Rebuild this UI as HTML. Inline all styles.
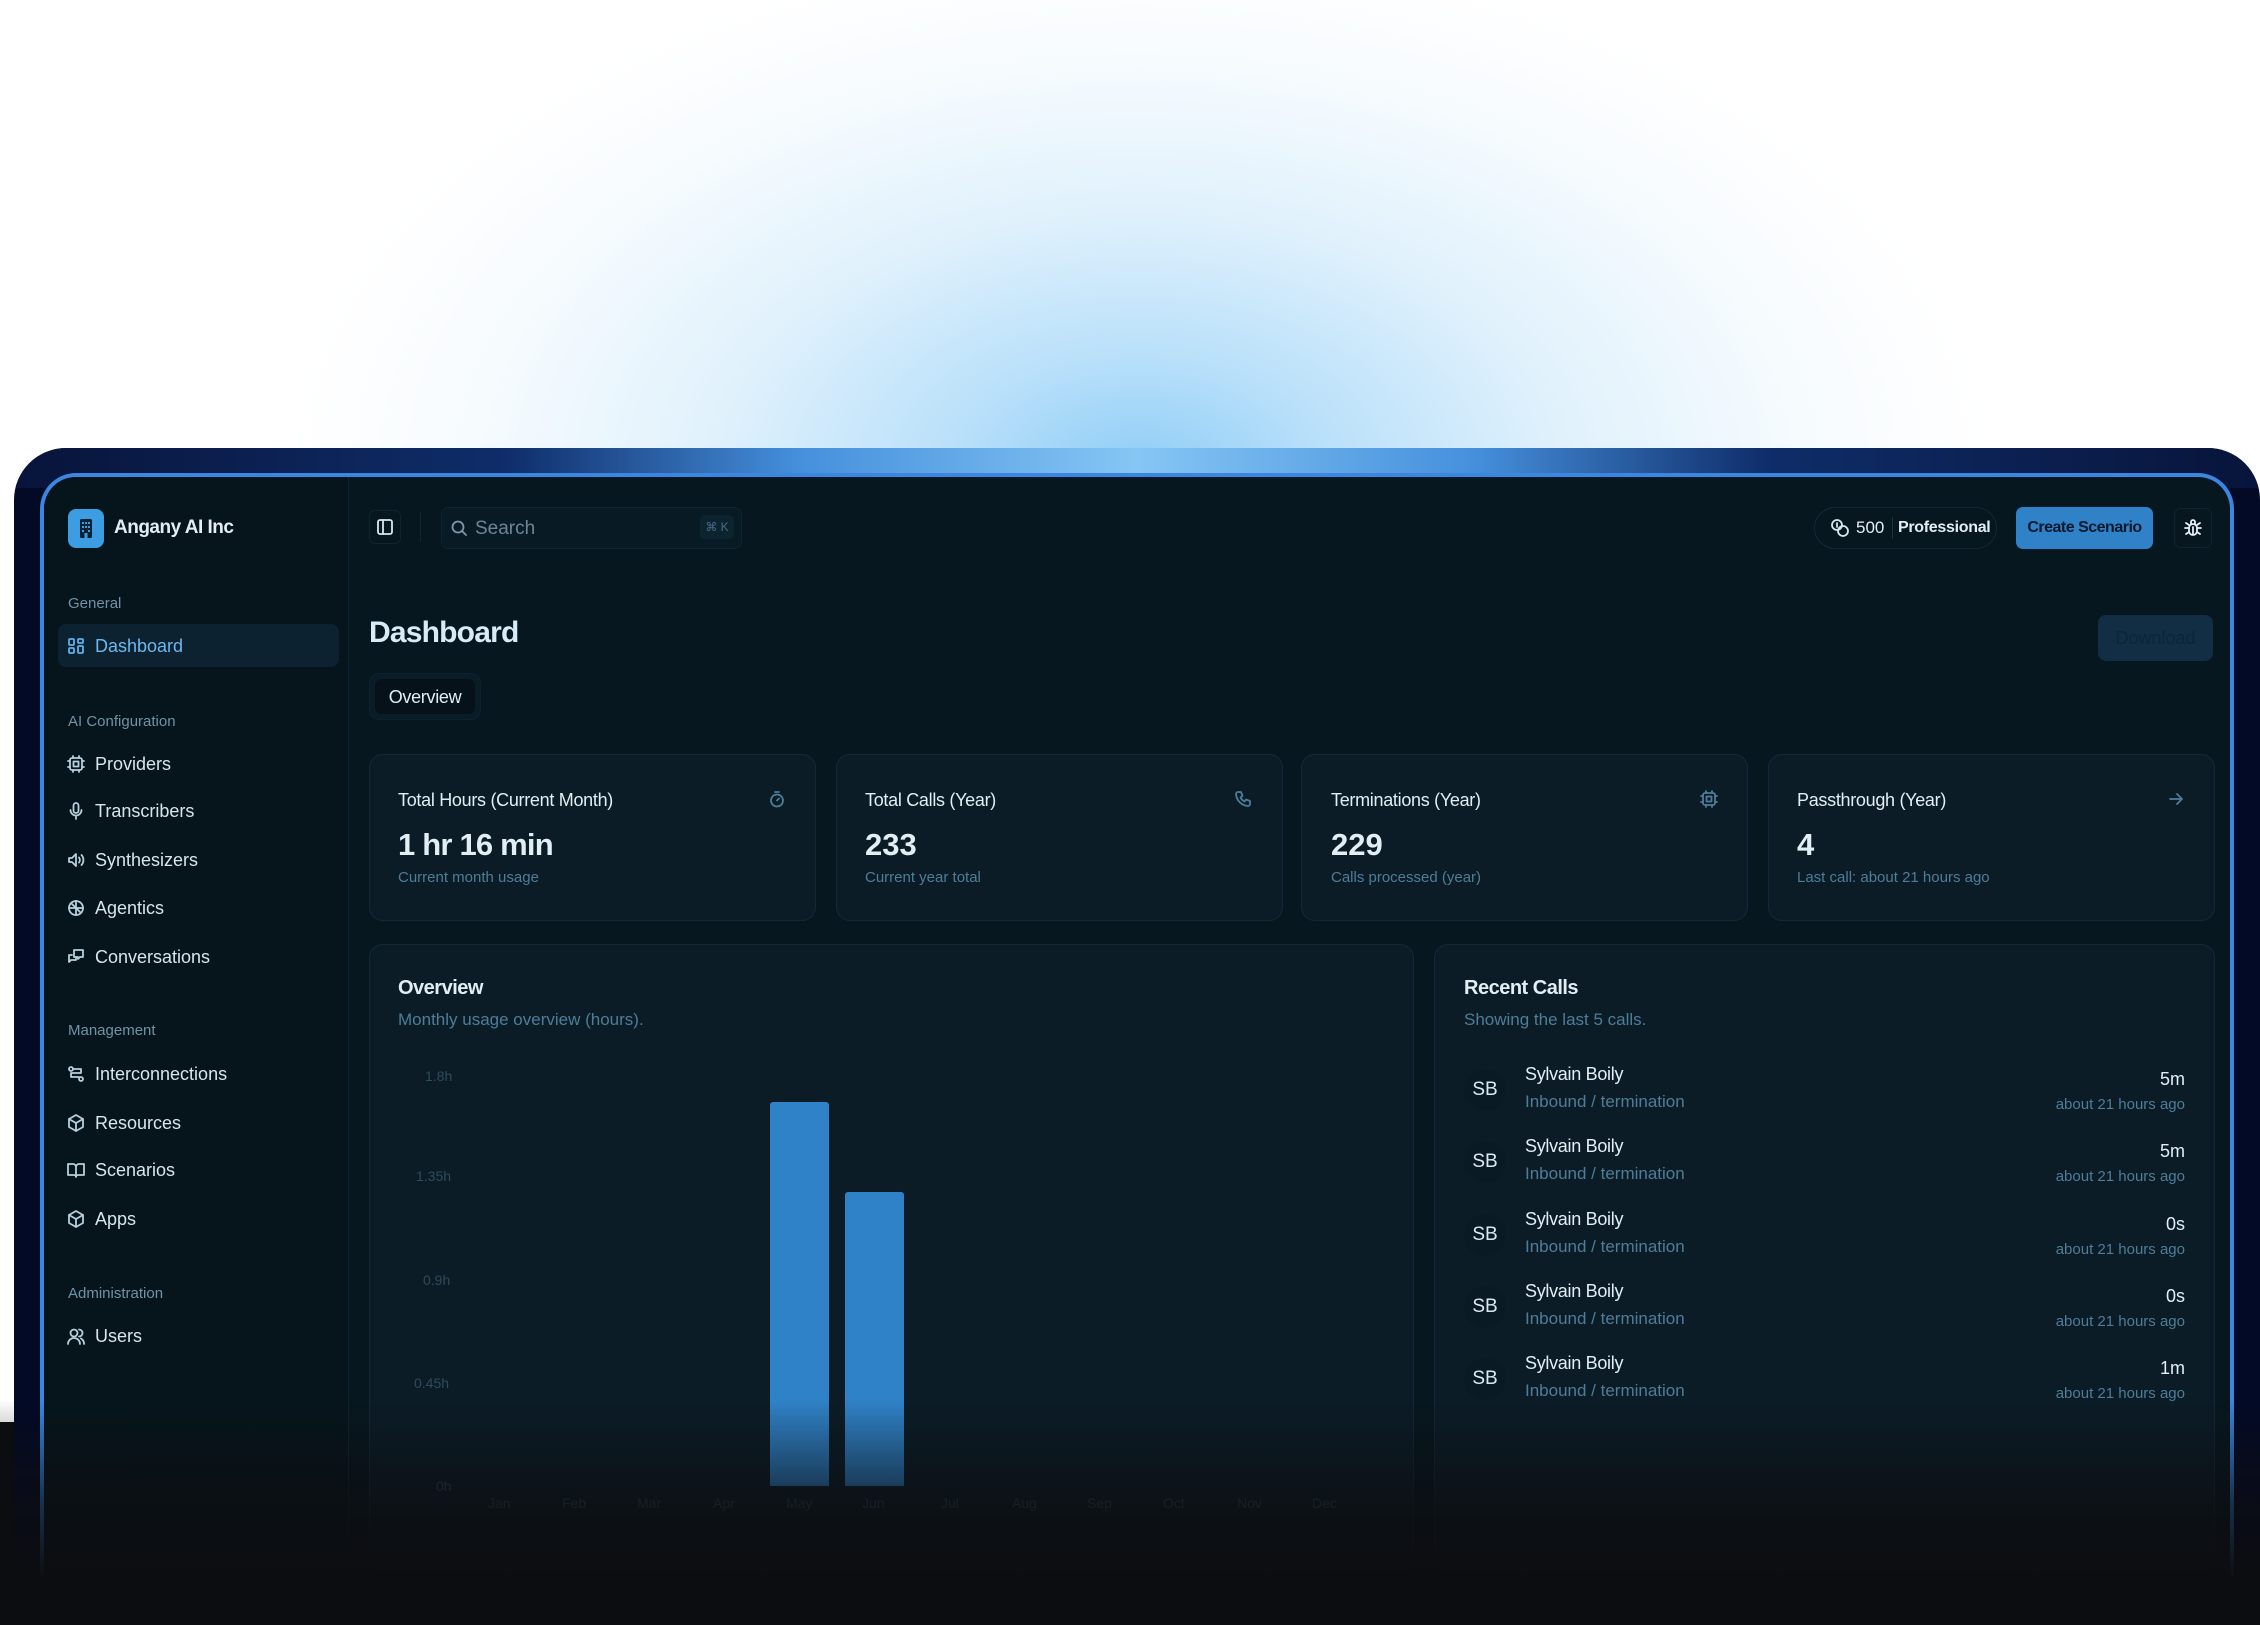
<!DOCTYPE html>
<html style="width:2260px;height:1625px;overflow:hidden"><head><meta charset="utf-8"><style>
*{margin:0;padding:0;box-sizing:border-box}
body{width:2260px;height:1625px;overflow:hidden;background:#fff;font-family:"Liberation Sans",sans-serif;position:relative}
.abs{position:absolute}
.glow{left:0;top:0;width:2260px;height:470px;background:radial-gradient(ellipse 850px 520px at 1138px 470px,#8fcdf6 0%,#b9e0fa 22%,#e0f1fc 50%,#f6fbfe 78%,#fff 100%)}
.frame{left:14px;top:448px;width:2246px;height:1177px;border-radius:52px 52px 0 0;background:#030a26;overflow:hidden}
.frame .band{position:absolute;left:0;top:0;width:2246px;height:40px;background:linear-gradient(90deg,#08143a 0%,#0f2d6a 22%,#4590dc 35%,#86c6f5 50%,#4590dc 65%,#0f2d6a 78%,#08143a 100%)}
.panel{left:40px;top:473px;width:2194px;height:1152px;border:4px solid #3a86e0;border-bottom:none;border-radius:36px 36px 0 0;background:#07171f;overflow:hidden}
.side{position:absolute;left:0;top:0;width:305px;height:1152px;background:#06151c;border-right:1px solid #0f2530}
.t{position:absolute;white-space:nowrap;color:#e2eef4}
.lbl{font-size:15px;color:#6f93a8}
.nav{font-size:18px;color:#d6e6ee}
.ico{position:absolute;width:18px;height:18px;fill:none;stroke:#b8cfdc;stroke-width:1.8;stroke-linecap:round;stroke-linejoin:round}
.card{position:absolute;background:#0b1c27;border:1.5px solid #122a38;border-radius:14px}
.muted{color:#4e7d98}
.ax{position:absolute;font-size:14px;color:#2f4a5c;white-space:nowrap}
.fade{left:0;top:1400px;width:2260px;height:225px;background:linear-gradient(180deg,rgba(12,13,16,0) 0%,rgba(12,13,16,.7) 45%,#0c0d10 80%)}
</style></head><body>
<div class="abs glow"></div>
<div class="abs frame"><div class="band"></div></div>
<div class="abs panel">
 <div class="side"></div>
</div>

<div class="abs" style="left:68px;top:509px;width:36px;height:39px;border-radius:8px;background:#3c9de2"></div>
<svg class="abs" style="left:77px;top:518px" width="18" height="21" viewBox="0 0 18 21"><rect x="3" y="1" width="12" height="19" rx="1.5" fill="#0b2233"/><g fill="#3c9de2"><rect x="5" y="4" width="2" height="2"/><rect x="8" y="4" width="2" height="2"/><rect x="11" y="4" width="2" height="2"/><rect x="5" y="8" width="2" height="2"/><rect x="8" y="8" width="2" height="2"/><rect x="11" y="8" width="2" height="2"/><rect x="5" y="12" width="2" height="2"/><rect x="11" y="12" width="2" height="2"/><rect x="7.5" y="15" width="3" height="5"/></g></svg>
<div class="t" style="left:114px;top:517px;font-size:19px;font-weight:bold;letter-spacing:-.5px">Angany AI Inc</div>

<div class="t lbl" style="left:68px;top:595px">General</div>
<div class="abs" style="left:58px;top:624px;width:281px;height:43px;border-radius:8px;background:#0c2230"></div>
<svg class="ico" style="left:67px;top:637px;stroke:#5fb0ec" viewBox="0 0 18 18"><rect x="2" y="2" width="5" height="6" rx="1"/><rect x="11" y="2" width="5" height="4" rx="1"/><rect x="2" y="11" width="5" height="5" rx="1"/><rect x="11" y="9" width="5" height="7" rx="1"/></svg>
<div class="t nav" style="left:95px;top:636px;color:#6cb8ef">Dashboard</div>

<div class="t lbl" style="left:68px;top:713px">AI Configuration</div>
<svg class="ico" style="left:67px;top:755px" viewBox="0 0 18 18"><rect x="3" y="3" width="12" height="12" rx="2"/><rect x="6.5" y="6.5" width="5" height="5"/><path d="M6 1v2M12 1v2M6 15v2M12 15v2M1 6h2M1 12h2M15 6h2M15 12h2"/></svg>
<div class="t nav" style="left:95px;top:754px">Providers</div>
<svg class="ico" style="left:67px;top:802px" viewBox="0 0 18 18"><rect x="6.5" y="1" width="5" height="10" rx="2.5"/><path d="M3.5 8a5.5 5.5 0 0 0 11 0M9 13.5V17"/></svg>
<div class="t nav" style="left:95px;top:801px">Transcribers</div>
<svg class="ico" style="left:67px;top:851px" viewBox="0 0 18 18"><path d="M9 3L5 7H2v4h3l4 4z"/><path d="M12 6.5a4 4 0 0 1 0 5M14.5 4a7.5 7.5 0 0 1 0 10"/></svg>
<div class="t nav" style="left:95px;top:850px">Synthesizers</div>
<svg class="ico" style="left:67px;top:899px" viewBox="0 0 18 18"><circle cx="9" cy="9" r="7"/><path d="M9 2v14M2 9h14M5 5l8 8"/></svg>
<div class="t nav" style="left:95px;top:898px">Agentics</div>
<svg class="ico" style="left:67px;top:948px" viewBox="0 0 18 18"><path d="M7 2h9v7h-3l-2 2V9H7z"/><path d="M5 7H2v7l2-2h5v-2"/></svg>
<div class="t nav" style="left:95px;top:947px">Conversations</div>

<div class="t lbl" style="left:68px;top:1022px">Management</div>
<svg class="ico" style="left:67px;top:1065px" viewBox="0 0 18 18"><circle cx="4" cy="4" r="2"/><circle cx="14" cy="14" r="2"/><path d="M6 4h8v4H4v4h8"/></svg>
<div class="t nav" style="left:95px;top:1064px">Interconnections</div>
<svg class="ico" style="left:67px;top:1114px" viewBox="0 0 18 18"><path d="M9 1l7 4v8l-7 4-7-4V5z"/><path d="M2 5l7 4 7-4M9 9v8"/></svg>
<div class="t nav" style="left:95px;top:1113px">Resources</div>
<svg class="ico" style="left:67px;top:1161px" viewBox="0 0 18 18"><path d="M1 3h5a3 3 0 0 1 3 3v10a2 2 0 0 0-2-2H1zM17 3h-5a3 3 0 0 0-3 3v10a2 2 0 0 1 2-2h6z"/></svg>
<div class="t nav" style="left:95px;top:1160px">Scenarios</div>
<svg class="ico" style="left:67px;top:1210px" viewBox="0 0 18 18"><path d="M9 1l7 4v8l-7 4-7-4V5z"/><path d="M2 5l7 4 7-4M9 9v8"/></svg>
<div class="t nav" style="left:95px;top:1209px">Apps</div>

<div class="t lbl" style="left:68px;top:1285px">Administration</div>
<svg class="ico" style="left:67px;top:1327px" viewBox="0 0 18 18"><circle cx="7" cy="6" r="3.5"/><path d="M1 17a6 6 0 0 1 12 0M12 2.5a3.5 3.5 0 0 1 0 7M14 11.5a6 6 0 0 1 3 5.5"/></svg>
<div class="t nav" style="left:95px;top:1326px">Users</div>

<div class="abs" style="left:369px;top:510px;width:32px;height:34px;border:1px solid #10242f;border-radius:6px"></div>
<svg class="ico" style="left:376px;top:518px;stroke:#dbe8ef" viewBox="0 0 18 18"><rect x="2" y="2" width="14" height="14" rx="2"/><path d="M7 2v14"/></svg>
<div class="abs" style="left:420px;top:512px;width:1px;height:30px;background:#12262f"></div>
<div class="abs" style="left:441px;top:507px;width:301px;height:42px;border:1px solid #10242f;border-radius:8px;background:#081a23"></div>
<svg class="ico" style="left:450px;top:519px;stroke:#7c98aa" viewBox="0 0 18 18"><circle cx="8" cy="8" r="5.5"/><path d="M12 12l4 4"/></svg>
<div class="t" style="left:475px;top:518px;font-size:19px;color:#6a879a">Search</div>
<div class="abs" style="left:700px;top:515px;width:34px;height:24px;border-radius:5px;background:#0c2330;color:#4a6c82;font-size:12px;text-align:center;line-height:24px">⌘ K</div>

<div class="abs" style="left:1814px;top:507px;width:183px;height:42px;border:1px solid #142833;border-radius:21px"></div>
<svg class="ico" style="left:1830px;top:518px;stroke:#d8e6ee;width:20px;height:20px" viewBox="0 0 20 20"><circle cx="7" cy="7" r="5"/><circle cx="13" cy="13" r="5"/><path d="M7 5v4"/></svg>
<div class="t" style="left:1856px;top:518px;font-size:17px">500</div>
<div class="abs" style="left:1892px;top:517px;width:1px;height:22px;background:#1a3240"></div>
<div class="t" style="left:1898px;top:519px;font-size:16px;font-weight:bold;letter-spacing:-.3px">Professional</div>
<div class="abs" style="left:2016px;top:507px;width:137px;height:42px;border-radius:7px;background:#2f82c8;color:#06182a;font-size:16px;font-weight:bold;text-align:center;line-height:42px;letter-spacing:-.5px">Create Scenario</div>
<div class="abs" style="left:2174px;top:508px;width:38px;height:40px;border:1px solid #10242f;border-radius:7px"></div>
<svg class="ico" style="left:2183px;top:518px;stroke:#e6f0f5;width:20px;height:20px" viewBox="0 0 20 20"><rect x="6" y="6" width="8" height="11" rx="4"/><path d="M8 6V4a2 2 0 0 1 4 0v2M2 10h4M14 10h4M3 5l3 2M17 5l-3 2M3 16l3-2M17 16l-3-2M10 9v7"/></svg>

<div class="t" style="left:369px;top:616px;font-size:30px;font-weight:bold;color:#d6ecf6;letter-spacing:-.8px">Dashboard</div>
<div class="abs" style="left:2098px;top:615px;width:115px;height:46px;border-radius:8px;background:#112e44;color:#0a2638;font-size:18px;text-align:center;line-height:46px">Download</div>
<div class="abs" style="left:369px;top:673px;width:112px;height:47px;border-radius:10px;background:#0a1c26;border:1px solid #0d2230"></div>
<div class="abs" style="left:375px;top:679px;width:100px;height:35px;border-radius:7px;background:#061219;color:#e2eef4;font-size:18px;text-align:center;line-height:36px;letter-spacing:-.3px">Overview</div>

<div class="card" style="left:369px;top:754px;width:447px;height:167px"></div>
<div class="card" style="left:836px;top:754px;width:447px;height:167px"></div>
<div class="card" style="left:1301px;top:754px;width:447px;height:167px"></div>
<div class="card" style="left:1768px;top:754px;width:447px;height:167px"></div>

<div class="t" style="left:398px;top:790px;font-size:18px;letter-spacing:-.3px">Total Hours (Current Month)</div>
<div class="t" style="left:398px;top:827px;font-size:31px;font-weight:bold;letter-spacing:-.8px">1 hr 16 min</div>
<div class="t muted" style="left:398px;top:869px;font-size:15px">Current month usage</div>
<svg class="ico" style="left:768px;top:790px;stroke:#4e7d98" viewBox="0 0 18 18"><circle cx="9" cy="10.5" r="6"/><path d="M7 2h4M9 10.5l2-2"/></svg>

<div class="t" style="left:865px;top:790px;font-size:18px;letter-spacing:-.3px">Total Calls (Year)</div>
<div class="t" style="left:865px;top:827px;font-size:31px;font-weight:bold">233</div>
<div class="t muted" style="left:865px;top:869px;font-size:15px">Current year total</div>
<svg class="ico" style="left:1234px;top:790px;stroke:#4e7d98" viewBox="0 0 18 18"><path d="M4 2h3l1.5 4-2 1.5a9 9 0 0 0 4 4L12 9.5l4 1.5v3a2 2 0 0 1-2 2A13 13 0 0 1 2 4a2 2 0 0 1 2-2z"/></svg>

<div class="t" style="left:1331px;top:790px;font-size:18px;letter-spacing:-.3px">Terminations (Year)</div>
<div class="t" style="left:1331px;top:827px;font-size:31px;font-weight:bold">229</div>
<div class="t muted" style="left:1331px;top:869px;font-size:15px">Calls processed (year)</div>
<svg class="ico" style="left:1700px;top:790px;stroke:#4e7d98" viewBox="0 0 18 18"><rect x="3" y="3" width="12" height="12" rx="2"/><rect x="6.5" y="6.5" width="5" height="5"/><path d="M6 1v2M12 1v2M6 15v2M12 15v2M1 6h2M1 12h2M15 6h2M15 12h2"/></svg>

<div class="t" style="left:1797px;top:790px;font-size:18px;letter-spacing:-.3px">Passthrough (Year)</div>
<div class="t" style="left:1797px;top:827px;font-size:31px;font-weight:bold">4</div>
<div class="t muted" style="left:1797px;top:869px;font-size:15px">Last call: about 21 hours ago</div>
<svg class="ico" style="left:2167px;top:790px;stroke:#4e7d98" viewBox="0 0 18 18"><path d="M3 9h12M10 4l5 5-5 5"/></svg>

<div class="card" style="left:369px;top:944px;width:1045px;height:720px"></div>
<div class="t" style="left:398px;top:977px;font-size:20px;font-weight:bold;letter-spacing:-.5px">Overview</div>
<div class="t muted" style="left:398px;top:1010px;font-size:17px">Monthly usage overview (hours).</div>
<div class="ax" style="left:425px;top:1068px">1.8h</div>
<div class="ax" style="left:416px;top:1168px">1.35h</div>
<div class="ax" style="left:423px;top:1272px">0.9h</div>
<div class="ax" style="left:414px;top:1375px">0.45h</div>
<div class="ax" style="left:436px;top:1478px">0h</div>
<div class="abs" style="left:770px;top:1102px;width:59px;height:384px;background:#2f82c8;border-radius:3px 3px 0 0"></div>
<div class="abs" style="left:845px;top:1192px;width:59px;height:294px;background:#2f82c8;border-radius:3px 3px 0 0"></div>
<div class="ax" style="left:488px;top:1495px">Jan</div>
<div class="ax" style="left:562px;top:1495px">Feb</div>
<div class="ax" style="left:637px;top:1495px">Mar</div>
<div class="ax" style="left:713px;top:1495px">Apr</div>
<div class="ax" style="left:786px;top:1495px">May</div>
<div class="ax" style="left:862px;top:1495px">Jun</div>
<div class="ax" style="left:941px;top:1495px">Jul</div>
<div class="ax" style="left:1012px;top:1495px">Aug</div>
<div class="ax" style="left:1087px;top:1495px">Sep</div>
<div class="ax" style="left:1163px;top:1495px">Oct</div>
<div class="ax" style="left:1237px;top:1495px">Nov</div>
<div class="ax" style="left:1312px;top:1495px">Dec</div>

<div class="card" style="left:1434px;top:944px;width:781px;height:720px"></div>
<div class="t" style="left:1464px;top:977px;font-size:20px;font-weight:bold;letter-spacing:-.5px">Recent Calls</div>
<div class="t muted" style="left:1464px;top:1010px;font-size:17px">Showing the last 5 calls.</div>

<div class="abs" style="left:1464px;top:1069px;width:42px;height:42px;border-radius:50%;background:#0a1a24;color:#dce9f0;font-size:19px;text-align:center;line-height:42px">SB</div>
<div class="t" style="left:1525px;top:1064px;font-size:18px;letter-spacing:-.3px">Sylvain Boily</div>
<div class="t muted" style="left:1525px;top:1092px;font-size:17px">Inbound / termination</div>
<div class="t" style="left:2000px;top:1069px;width:185px;text-align:right;font-size:18px">5m</div>
<div class="t muted" style="left:2000px;top:1096px;width:185px;text-align:right;font-size:15px">about 21 hours ago</div>

<div class="abs" style="left:1464px;top:1141px;width:42px;height:42px;border-radius:50%;background:#0a1a24;color:#dce9f0;font-size:19px;text-align:center;line-height:42px">SB</div>
<div class="t" style="left:1525px;top:1136px;font-size:18px;letter-spacing:-.3px">Sylvain Boily</div>
<div class="t muted" style="left:1525px;top:1164px;font-size:17px">Inbound / termination</div>
<div class="t" style="left:2000px;top:1141px;width:185px;text-align:right;font-size:18px">5m</div>
<div class="t muted" style="left:2000px;top:1168px;width:185px;text-align:right;font-size:15px">about 21 hours ago</div>

<div class="abs" style="left:1464px;top:1214px;width:42px;height:42px;border-radius:50%;background:#0a1a24;color:#dce9f0;font-size:19px;text-align:center;line-height:42px">SB</div>
<div class="t" style="left:1525px;top:1209px;font-size:18px;letter-spacing:-.3px">Sylvain Boily</div>
<div class="t muted" style="left:1525px;top:1237px;font-size:17px">Inbound / termination</div>
<div class="t" style="left:2000px;top:1214px;width:185px;text-align:right;font-size:18px">0s</div>
<div class="t muted" style="left:2000px;top:1241px;width:185px;text-align:right;font-size:15px">about 21 hours ago</div>

<div class="abs" style="left:1464px;top:1286px;width:42px;height:42px;border-radius:50%;background:#0a1a24;color:#dce9f0;font-size:19px;text-align:center;line-height:42px">SB</div>
<div class="t" style="left:1525px;top:1281px;font-size:18px;letter-spacing:-.3px">Sylvain Boily</div>
<div class="t muted" style="left:1525px;top:1309px;font-size:17px">Inbound / termination</div>
<div class="t" style="left:2000px;top:1286px;width:185px;text-align:right;font-size:18px">0s</div>
<div class="t muted" style="left:2000px;top:1313px;width:185px;text-align:right;font-size:15px">about 21 hours ago</div>

<div class="abs" style="left:1464px;top:1358px;width:42px;height:42px;border-radius:50%;background:#0a1a24;color:#dce9f0;font-size:19px;text-align:center;line-height:42px">SB</div>
<div class="t" style="left:1525px;top:1353px;font-size:18px;letter-spacing:-.3px">Sylvain Boily</div>
<div class="t muted" style="left:1525px;top:1381px;font-size:17px">Inbound / termination</div>
<div class="t" style="left:2000px;top:1358px;width:185px;text-align:right;font-size:18px">1m</div>
<div class="t muted" style="left:2000px;top:1385px;width:185px;text-align:right;font-size:15px">about 21 hours ago</div>

<div class="abs fade"></div>
<div class="abs" style="left:0;top:1422px;width:14px;height:203px;background:#0c0d10"></div>
</body></html>
